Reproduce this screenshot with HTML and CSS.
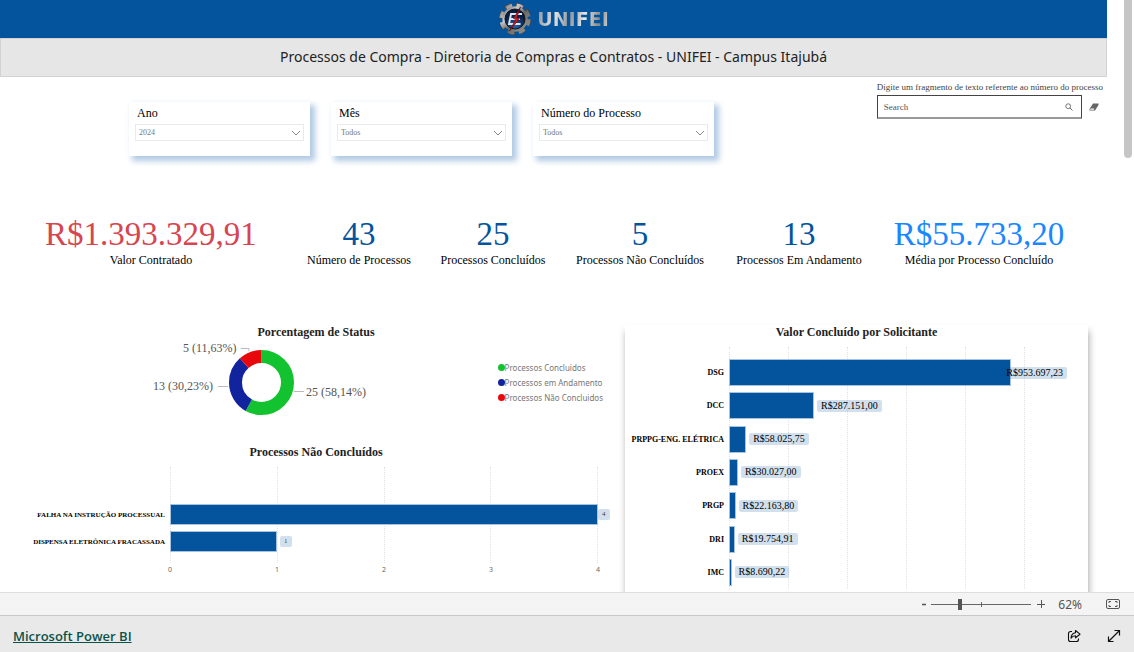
FILE: index.html
```html
<!DOCTYPE html>
<html lang="pt-BR">
<head>
<meta charset="utf-8">
<meta name="viewport" content="width=device-width, initial-scale=1">
<title>Processos de Compra - UNIFEI</title>
<link rel="stylesheet" href="styles.css">
</head>
<body>
<main class="viewport">
  <div class="report">
    <header class="banner">
      <svg class="gear" viewBox="0 0 34 34" aria-hidden="true">
        <defs>
          <linearGradient id="steel" x1="0" y1="0" x2="1" y2="1"><stop offset="0" stop-color="#666"/><stop offset=".3" stop-color="#ccc"/><stop offset=".55" stop-color="#666"/><stop offset="1" stop-color="#999"/></linearGradient>
          <radialGradient id="core" cx=".5" cy=".8"><stop offset="0" stop-color="#2367b4"/><stop offset="1" stop-color="#081c43"/></radialGradient>
        </defs>
        <circle cx="17" cy="17" r="14" fill="none" stroke="#444" stroke-width="4.6" stroke-dasharray="7 4"/>
        <circle cx="17" cy="17" r="13.800" fill="none" stroke="url(#steel)" stroke-width="3.6" stroke-dasharray="6.400 4.600" stroke-dashoffset="-.3"/>
        <circle cx="17" cy="17" r="11.400" fill="url(#core)" stroke="url(#steel)" stroke-width="2.6"/>
        <circle cx="17" cy="17" r="10" fill="none" stroke="#161616" stroke-width="1"/>
        <path d="M24 12H13l-2 10h11.500M12.500 17H22" fill="none" stroke="#dfe6ee" stroke-width="1.900"/>
        <path d="M22.500 5l-7 11.500 2.500.5L11.500 29l10-12.500-2.800-.7z" fill="#d51c20" stroke="#49080c" stroke-width=".6"/>
      </svg>
      <span class="brand">UNIFEI</span>
    </header>
    <h1 class="title">Processos de Compra - Diretoria de Compras e Contratos - UNIFEI - Campus Itajubá</h1>

    <section class="filters">
      <div class="slicers">
        <div class="slicer">
          <label for="ano">Ano</label>
          <div class="dropdown"><select id="ano"><option>2024</option></select><svg viewBox="0 0 10 6"><path d="M1 1l4 4 4-4"/></svg></div>
        </div>
        <div class="slicer">
          <label for="mes">Mês</label>
          <div class="dropdown"><select id="mes"><option>Todos</option></select><svg viewBox="0 0 10 6"><path d="M1 1l4 4 4-4"/></svg></div>
        </div>
        <div class="slicer">
          <label for="num">Número do Processo</label>
          <div class="dropdown"><select id="num"><option>Todos</option></select><svg viewBox="0 0 10 6"><path d="M1 1l4 4 4-4"/></svg></div>
        </div>
      </div>
      <form class="search">
        <label for="busca">Digite um fragmento de texto referente ao número do processo</label>
        <div class="search-row">
          <div class="search-box">
            <input id="busca" type="text" placeholder="Search">
            <button type="button" aria-label="Buscar"><svg viewBox="0 0 8 8"><circle cx="3.200" cy="3.200" r="2.400" fill="none" stroke="#666" stroke-width=".9"/><path d="M5 5l2.500 2.500" stroke="#666"/></svg></button>
          </div>
          <button type="button" aria-label="Limpar"><svg viewBox="0 0 10 8"><path d="M4 .5h5.500v1.500L6 7.500H.5V6z" fill="#666"/><path d="M1.600 5.600h3.700L4.700 6.700H1z" fill="#fff"/></svg></button>
        </div>
      </form>
    </section>

    <section class="kpis">
      <div class="kpi red"><strong>R$1.393.329,91</strong><span>Valor Contratado</span></div>
      <div class="kpi"><strong>43</strong><span>Número de Processos</span></div>
      <div class="kpi"><strong>25</strong><span>Processos Concluídos</span></div>
      <div class="kpi"><strong>5</strong><span>Processos Não Concluídos</span></div>
      <div class="kpi"><strong>13</strong><span>Processos Em Andamento</span></div>
      <div class="kpi sky"><strong>R$55.733,20</strong><span>Média por Processo Concluído</span></div>
    </section>

    <section class="charts">
      <div class="left">
        <h2>Porcentagem de Status</h2>
        <div class="status">
          <svg class="donut" viewBox="0 0 240 80">
            <g fill="none" stroke-width="13" transform="rotate(-90 121.500 42.500)">
              <circle cx="121.500" cy="42.500" r="26" pathLength="100" stroke="#12c22f" stroke-dasharray="58.140 41.860"/>
              <circle cx="121.500" cy="42.500" r="26" pathLength="100" stroke="#12239e" stroke-dasharray="30.230 69.770" stroke-dashoffset="-58.140"/>
              <circle cx="121.500" cy="42.500" r="26" pathLength="100" stroke="#e8080b" stroke-dasharray="11.630 88.370" stroke-dashoffset="-88.370"/>
            </g>
            <path d="M101 8.500h8v3M78 46.500h10M154 51.500h10" fill="none" stroke="#bbb"/>
            <text x="43" y="12">5 (11,63%)</text>
            <text x="13" y="50">13 (30,23%)</text>
            <text x="166" y="56">25 (58,14%)</text>
          </svg>
          <ul class="legend">
            <li class="green">Processos Concluidos</li>
            <li class="navy">Processos em Andamento</li>
            <li class="crimson">Processos Não Concluidos</li>
          </ul>
        </div>
        <h2>Processos Não Concluídos</h2>
        <div class="bars small">
          <div class="names"><span>FALHA NA INSTRUÇÃO PROCESSUAL</span><span>DISPENSA ELETRÔNICA FRACASSADA</span></div>
          <div class="grid"><i></i><i></i><i></i><i></i></div>
          <div class="plot">
            <div class="row"><div class="bar" style="width:100%"></div><span class="value flush">4</span></div>
            <div class="row"><div class="bar" style="width:25%"></div><span class="value">1</span></div>
          </div>
          <div class="axis"><span>0</span><span>1</span><span>2</span><span>3</span><span>4</span></div>
        </div>
      </div>
      <div class="panel">
        <h2>Valor Concluído por Solicitante</h2>
        <div class="bars large">
          <div class="names"><span>DSG</span><span>DCC</span><span>PRPPG-ENG. ELÉTRICA</span><span>PROEX</span><span>PRGP</span><span>DRI</span><span>IMC</span></div>
          <div class="grid"><i></i><i></i><i></i><i></i><i></i></div>
          <div class="plot">
            <div class="row"><div class="bar" style="width:95.370%"></div><span class="value over">R$953.697,23</span></div>
            <div class="row"><div class="bar" style="width:28.715%"></div><span class="value">R$287.151,00</span></div>
            <div class="row"><div class="bar" style="width:5.803%"></div><span class="value">R$58.025,75</span></div>
            <div class="row"><div class="bar" style="width:3.003%"></div><span class="value">R$30.027,00</span></div>
            <div class="row"><div class="bar" style="width:2.216%"></div><span class="value">R$22.163,80</span></div>
            <div class="row"><div class="bar" style="width:1.975%"></div><span class="value">R$19.754,91</span></div>
            <div class="row"><div class="bar" style="width:0.869%"></div><span class="value">R$8.690,22</span></div>
          </div>
        </div>
      </div>
    </section>
  </div>
  <div class="scroll"><div class="scroll-thumb"></div></div>
</main>

<div class="zoombar">
  <button type="button" aria-label="Reduzir zoom"><svg width="6" height="12" viewBox="0 0 6 12"><path d="M1 6.500h4" stroke="#555" stroke-width="1.500"/></svg></button>
  <input class="zoom" type="range" min="0" max="100" value="28" aria-label="Zoom">
  <button type="button" aria-label="Aumentar zoom"><svg width="8" height="8" viewBox="0 0 8 8"><path d="M0 4.500h8M4.500 0v8" stroke="#555"/></svg></button>
  <output>62%</output>
  <button type="button" class="fit" aria-label="Ajustar à página"><svg width="14" height="10" viewBox="0 0 14 10" fill="none" stroke="#555"><rect x=".5" y=".5" width="13" height="9" rx="1.500"/><path d="M5 2.500H3V4M3 6v1.500h2M9 2.500h2V4M11 6v1.500H9"/></svg></button>
</div>
<footer class="footer">
  <a href="#">Microsoft Power BI</a>
  <div class="actions">
    <button type="button" aria-label="Compartilhar"><svg width="14" height="14" viewBox="0 0 14 14" fill="none" stroke="#111" stroke-width="1.100"><path d="M5 2.500H3.500a2 2 0 0 0-2 2v6a2 2 0 0 0 2 2h6a2 2 0 0 0 2-2V9.500"/><path d="M8.500 1.500l4.500 3.700-4.500 3.600V6.700C6.500 6.700 5 7.500 4 9.200c.2-3 1.800-5.200 4.500-5.500z" stroke-linejoin="round"/></svg></button>
    <button type="button" aria-label="Tela cheia"><svg width="14" height="14" viewBox="0 0 14 14" fill="none" stroke="#111" stroke-width="1.200"><path d="M1.500 12.500l11-11M7.500 1.500h5v5M1.500 7.500v5h5"/></svg></button>
  </div>
</footer>
</body>
</html>
```
FILE: styles.css
```css
* { box-sizing: border-box; }
body {
  margin: 0;
  height: 100vh;
  display: flex;
  flex-direction: column;
  background: #fff;
  color: #000;
  font-family: "Liberation Serif", serif;
}
button { padding: 0; border: 0; background: none; display: flex; }
h1, h2 { margin: 0; }

.viewport { flex: 1; min-height: 0; display: flex; overflow: hidden; }
.report { flex: 1; min-width: 0; }
.scroll { width: 27px; display: flex; justify-content: flex-end; padding-right: 2px; }
.scroll-thumb { width: 8px; height: 158px; border-radius: 0 0 4px 4px; background: #c6c6c6; }

.banner {
  height: 38px;
  display: flex;
  align-items: center;
  justify-content: center;
  gap: 5px;
  background: #03549c;
}
.gear { width: 34px; height: 34px; }
.brand {
  font: bold 19px/24px "DejaVu Sans", sans-serif;
  color: transparent;
  background: linear-gradient(100deg, #8a8f96, #e4e4e4 25%, #8f949a 45%, #e8e8e8 65%, #888 85%, #ddd);
  background-clip: text;
  -webkit-background-clip: text;
}
.title {
  height: 39px;
  border: 1px solid #d2d2d2;
  background: #e6e6e6;
  color: #222;
  font: 14px/36px "Noto Sans", sans-serif;
  text-align: center;
}

.filters { display: flex; justify-content: space-between; }
.slicers { display: flex; gap: 21px; padding: 25px 0 0 129px; }
.slicer {
  width: 181px;
  height: 54px;
  padding: 3px 6px;
  background: #fff;
  box-shadow: 4px 4px 6px 1px #b0cae3;
}
.slicer label { display: block; padding-left: 2px; font-size: 12px; line-height: 16px; }
.dropdown { display: grid; align-items: center; margin-top: 3px; }
.dropdown > * { grid-area: 1 / 1; }
.dropdown select {
  appearance: none;
  width: 100%;
  height: 17px;
  padding: 0 3px;
  border: 1px solid #eaeaea;
  border-radius: 0;
  background: #fff;
  color: #777;
  font: 8px "Liberation Serif", serif;
}
.dropdown svg {
  justify-self: end;
  width: 10px;
  height: 6px;
  margin-right: 3px;
  fill: none;
  stroke: #888;
  stroke-width: 1;
  pointer-events: none;
}
.search { padding: 4px 4px 0 0; }
.search label { display: block; font-size: 9px; line-height: 12px; color: #444; }
.search-row { display: flex; align-items: center; gap: 7px; padding-top: 2px; }
.search-box { width: 205px; height: 24px; display: flex; align-items: center; border: 1px solid #444; border-bottom: 2px solid #999; padding-right: 8px; }
.search-box input { flex: 1; min-width: 0; border: 0; padding: 0 6px; outline: 0; background: none; font: 9px "Liberation Serif", serif; }
.search-box input::placeholder { color: #555; }
.search-box svg { width: 8px; height: 8px; }
.search-row > button svg { width: 10px; height: 8px; }

.kpis {
  display: grid;
  grid-template-columns: 302fr 114fr 154fr 140fr 178fr 182fr 37fr;
  margin-top: 60px;
}
.kpi { display: flex; flex-direction: column; align-items: center; white-space: nowrap; min-width: 0; }
.kpi strong { font-weight: normal; font-size: 33px; line-height: 36px; color: #03549c; }
.kpi span { font-size: 12px; line-height: 16px; }
.kpi.red strong { color: #d64550; }
.kpi.sky strong { color: #1a86ff; }

.charts {
  display: grid;
  grid-template-columns: 617fr 463fr;
  gap: 8px;
  margin-top: 57px;
  padding-right: 19px;
}
h2 { padding-bottom: 1px; font-size: 12px; line-height: 14px; text-align: center; color: #222; }
.left { min-width: 0; padding-left: 15px; }
.status { display: flex; justify-content: space-between; height: 105px; padding: 0 14px 0 125px; }
.donut { width: 240px; height: 80px; font-size: 12px; fill: #555; }
.legend { margin: 0; padding: 20px 0 0; list-style: none; font: 8px/15px "Noto Sans", sans-serif; color: #777; }
.legend li { display: flex; align-items: center; }
.legend li::before { content: ""; width: 7px; height: 7px; border-radius: 50%; background: currentColor; }
.legend .green::before { background: #12c22f; }
.legend .navy::before { background: #12239e; }
.legend .crimson::before { background: #e8080b; }

.bars { display: grid; }
.names, .plot { display: grid; grid-auto-rows: 1fr; font-weight: bold; }
.names { grid-area: 1 / 1; text-align: right; white-space: nowrap; }
.names span { align-self: center; }
.grid, .plot { grid-area: 1 / 2; }
.grid { display: grid; grid-auto-flow: column; grid-auto-columns: 1fr; border-left: 1px dotted #e2e2e2; }
.grid i { border-right: 1px dotted #e2e2e2; }
.row { display: flex; align-items: center; white-space: nowrap; }
.bar { flex: none; background: #03549c; outline: 1px solid #a5c3df; outline-offset: -1px; }
.value {
  margin-left: 3px;
  padding: 0 4px;
  border-radius: 2px;
  background: rgba(3, 84, 156, .18);
  font-weight: normal;
}
.value.over { margin-left: -9px; }
.value.flush { margin-left: 0; }

.small { grid-template-columns: 155px 1fr; padding: 7px 19px 0 0; font-size: 7px; }
.small .names { padding: 34px 0 8px; }
.small .names span { padding-right: 5px; }
.small .plot { padding: 34px 0 8px; }
.small .row { height: 27px; }
.small .bar { height: 21px; }
.small .value { line-height: 11px; color: #444; }
.small .axis { grid-area: 2 / 2; display: flex; justify-content: space-between; line-height: 14px; color: #666; font-family: "Noto Sans", sans-serif; }
.small .axis span { width: 0; display: flex; justify-content: center; }

.panel { min-width: 0; height: 300px; background: #fff; box-shadow: 1px 6px 7px 0 #aaa; }
.large { grid-template-columns: 104px 1fr; padding: 7px 63px 0 0; font-size: 8px; }
.large .names, .large .plot { height: 242px; padding-top: 9px; }
.large .names span { padding-right: 5px; }
.large .bar { height: 27px; }
.large .value { font-size: 10px; line-height: 12px; }

.zoombar {
  height: 24px;
  display: flex;
  align-items: center;
  padding-right: 14px;
  border-top: 1px solid #ddd;
  border-bottom: 1px solid #c8c8c8;
  justify-content: flex-end;
  background: #f4f4f4;
  font: 12px "Noto Sans", sans-serif;
  color: #555;
}
.zoombar output { margin: 0 24px 0 13px; }
.zoom {
  appearance: none;
  width: 100px;
  height: 12px;
  margin: 0 6px 0 4px;
  background:
    linear-gradient(#666, #666) 50% 50% / 1px 5px no-repeat,
    linear-gradient(#666, #666) 50% 50% / 100% 1px no-repeat;
}
.zoom::-webkit-slider-thumb { appearance: none; width: 4px; height: 11px; background: #555; }

.footer {
  height: 36px;
  display: flex;
  align-items: center;
  justify-content: space-between;
  padding: 4px 13px 0;
  background: #e9e9e9;
}
.footer a { color: #0b5348; font: 600 13px "Open Sans", sans-serif; }
.actions { display: flex; gap: 26px; }
```
